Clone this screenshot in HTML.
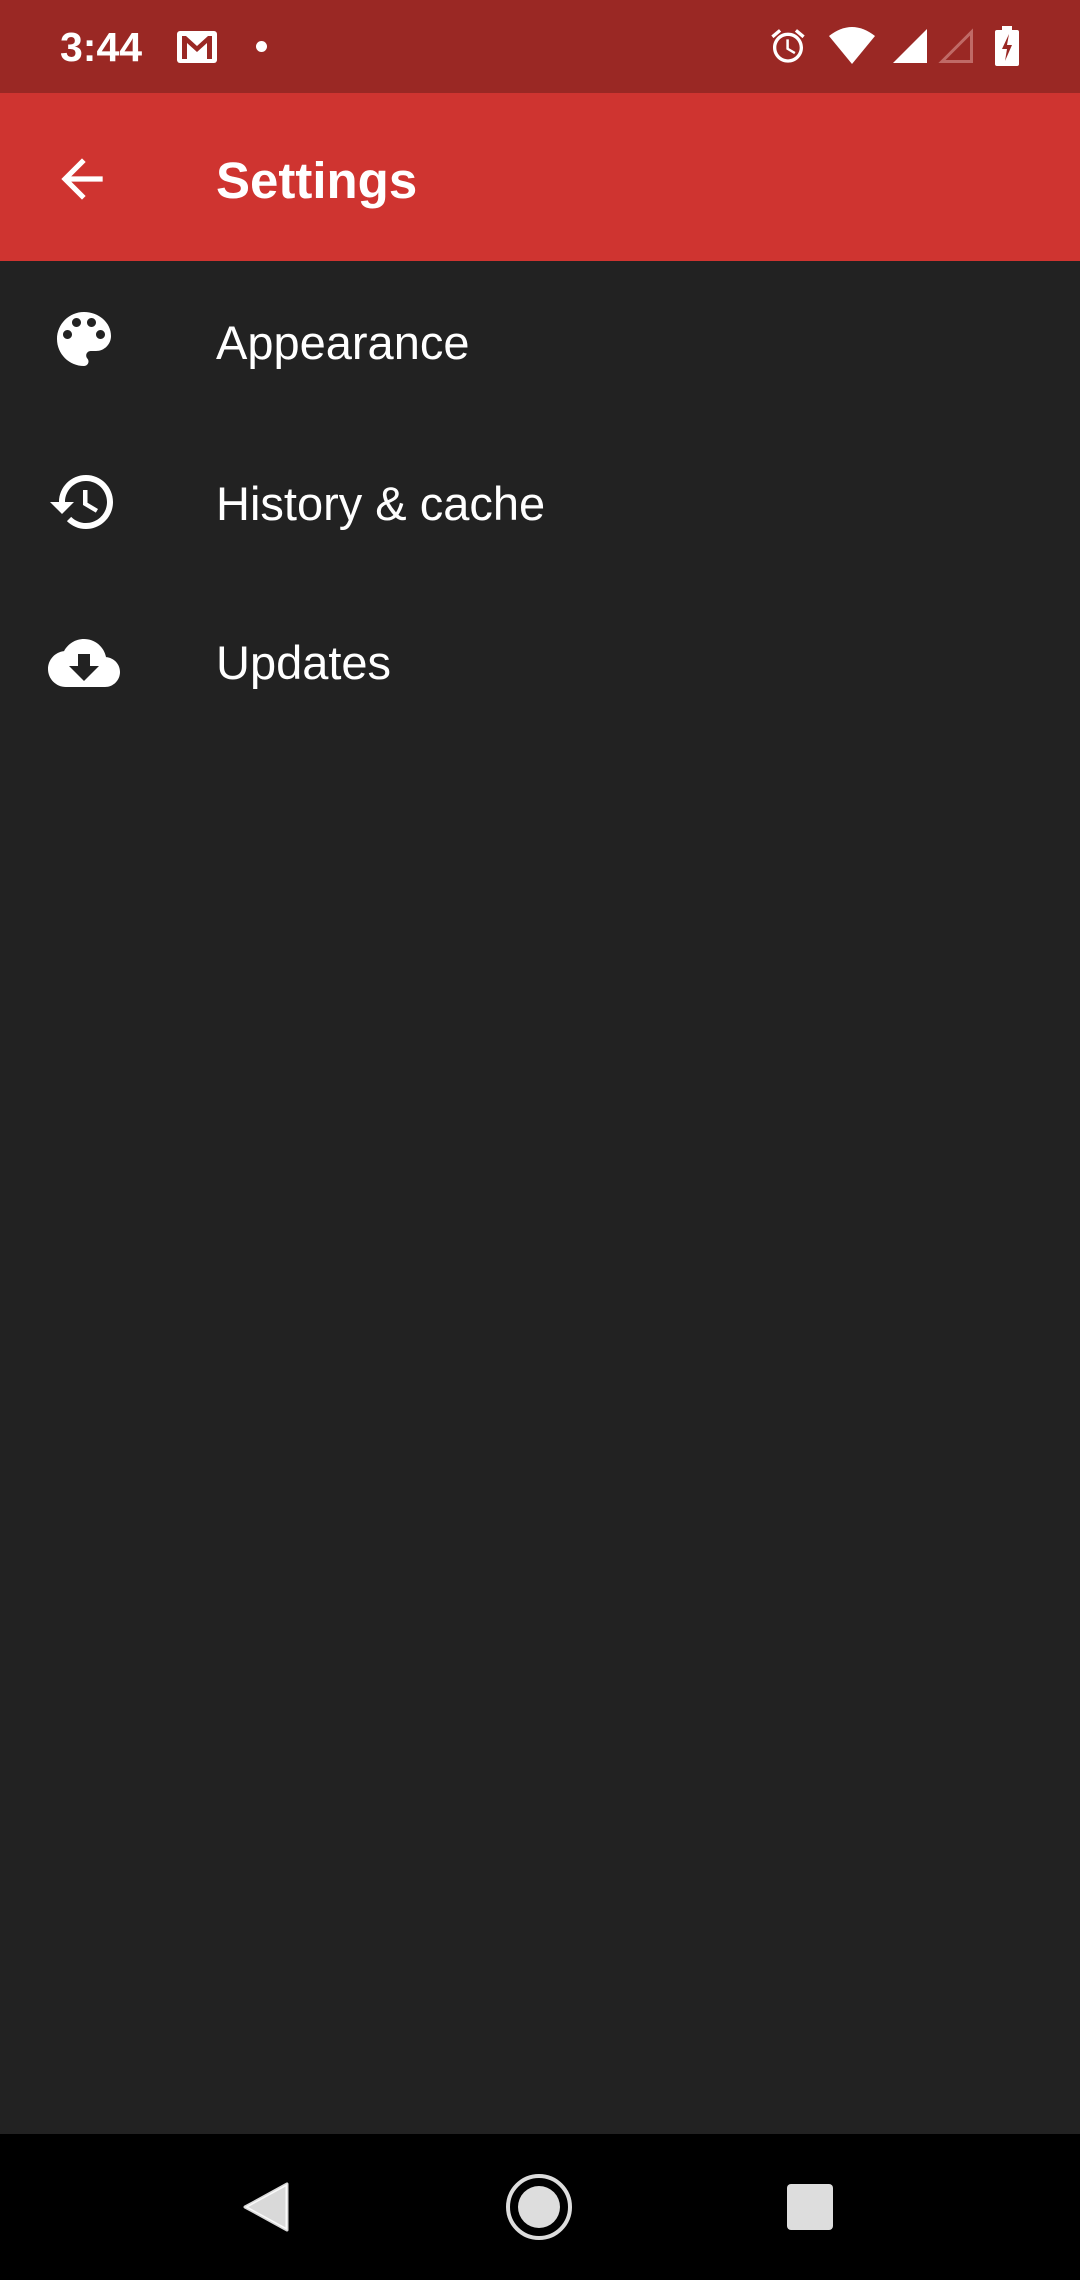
<!DOCTYPE html>
<html><head><meta charset="utf-8"><style>
*{margin:0;padding:0;box-sizing:border-box}
body{width:1080px;height:2280px;background:#222222;font-family:"Liberation Sans",Roboto,sans-serif;color:#fff;position:relative;overflow:hidden}
.abs{position:absolute}
#status{left:0;top:0;width:1080px;height:93px;background:#9a2824}
#bar{left:0;top:93px;width:1080px;height:168px;background:#cf3430}
.t{position:absolute;white-space:nowrap;line-height:1}
#nav{left:0;top:2134px;width:1080px;height:146px;background:#000}
</style></head><body>
<div id="status" class="abs">
 <div class="t" style="left:60px;top:27px;font-size:41px;font-weight:bold">3:44</div>
 <svg class="abs" style="left:176px;top:30px" width="42" height="34" viewBox="0 0 42 34"><rect x="1" y="1" width="40" height="32" rx="3" fill="#fff"/><path d="M6 6 L6 29 L11 29 L11 13 L21 22 L31 13 L31 29 L36 29 L36 6 L32 6 L21 16 L10 6Z" fill="#9a2824"/></svg>
 <div class="abs" style="left:256px;top:41px;width:11px;height:11px;border-radius:50%;background:#fff"></div>
 <svg class="abs" style="left:768px;top:26px" width="40" height="40" viewBox="0 0 24 24"><path fill="#fff" d="M22 5.72l-4.6-3.860-1.29 1.53 4.6 3.86L22 5.72zM7.88 3.39L6.6 1.86 2 5.71l1.29 1.53 4.59-3.85zM12.5 8H11v6l4.75 2.85.75-1.23-4-2.37V8zM12 4c-4.97 0-9 4.03-9 9s4.02 9 9 9c4.97 0 9-4.03 9-9s-4.03-9-9-9zm0 16c-3.87 0-7-3.130-7-7s3.13-7 7-7 7 3.13 7 7-3.13 7-7 7z"/></svg>
 <svg class="abs" style="left:828px;top:26px" width="48" height="38" viewBox="0 0 48 38"><path d="M1 10 Q24 -8 47 10 L24 38Z" fill="#fff"/></svg>
 <svg class="abs" style="left:892px;top:28px" width="36" height="36" viewBox="0 0 36 36"><path d="M35 1 L35 35 L1 35Z" fill="#fff"/></svg>
 <svg class="abs" style="left:938px;top:28px" width="36" height="36" viewBox="0 0 36 36"><path d="M33.5 4 L33.5 33.5 L4 33.5Z" fill="none" stroke="#c06a66" stroke-width="3"/></svg>
 <svg class="abs" style="left:995px;top:26px" width="24" height="40" viewBox="0 0 24 40"><rect x="7" y="0" width="10" height="4" fill="#fff"/><rect x="0" y="4" width="24" height="36" rx="2" fill="#fff"/><path d="M14 8 L7 23 L12 23 L10 35 L17 19 L12 19Z" fill="#9a2824"/></svg>
</div>
<div id="bar" class="abs">
 <svg class="abs" style="left:51px;top:55px" width="62" height="62" viewBox="0 0 24 24"><path fill="#fff" d="M20 11H7.83l5.59-5.59L12 4l-8 8 8 8 1.41-1.41L7.83 13H20v-2z"/></svg>
 <div class="t" style="left:216px;top:62px;font-size:51px;font-weight:bold">Settings</div>
</div>
<svg class="abs" style="left:48px;top:303px" width="72" height="72" viewBox="0 0 24 24"><path fill="#fff" d="M12 3c-4.970 0-9 4.030-9 9s4.030 9 9 9c.83 0 1.5-.67 1.5-1.5 0-.39-.15-.74-.39-1.01-.23-.26-.38-.61-.38-.99 0-.83.67-1.5 1.5-1.5H16c2.76 0 5-2.24 5-5 0-4.42-4.03-8-9-8zm-5.5 9c-.83 0-1.5-.67-1.5-1.5S5.67 9 6.5 9 8 9.67 8 10.5 7.33 12 6.5 12zm3-4C8.67 8 8 7.33 8 6.5S8.67 5 9.5 5s1.5.67 1.5 1.5S10.33 8 9.5 8zm5 0c-.83 0-1.5-.67-1.5-1.5S13.67 5 14.5 5s1.5.67 1.5 1.5S15.33 8 14.5 8zm3 4c-.83 0-1.5-.67-1.5-1.5S16.670 9 17.5 9s1.5.67 1.5 1.5-.67 1.5-1.5 1.5z"/></svg>
<div class="t" style="left:216px;top:319px;font-size:47px">Appearance</div>
<svg class="abs" style="left:47px;top:466px" width="72" height="72" viewBox="0 0 24 24"><path fill="#fff" d="M13 3c-4.97 0-9 4.03-9 9H1l3.89 3.89.07.14L9 12H6c0-3.87 3.13-7 7-7s7 3.13 7 7-3.13 7-7 7c-1.93 0-3.68-.79-4.94-2.06l-1.42 1.42C8.27 19.99 10.51 21 13 21c4.97 0 9-4.03 9-9s-4.03-9-9-9zm-1 5v5l4.28 2.54.72-1.21-3.5-2.08V8H12z"/></svg>
<div class="t" style="left:216px;top:480px;font-size:47px">History &amp; cache</div>
<svg class="abs" style="left:48px;top:627px" width="72" height="72" viewBox="0 0 24 24"><path fill="#fff" d="M19.35 10.04C18.67 6.59 15.64 4 12 4 9.11 4 6.6 5.64 5.35 8.04 2.34 8.36 0 10.91 0 14c0 3.31 2.69 6 6 6h13c2.76 0 5-2.24 5-5 0-2.64-2.05-4.78-4.65-4.96zM17 13l-5 5-5-5h3V9h4v4h3z"/></svg>
<div class="t" style="left:216px;top:639px;font-size:47px">Updates</div>
<div id="nav" class="abs">
 <svg class="abs" style="left:243px;top:48px" width="46" height="50" viewBox="0 0 46 50"><path d="M44 2 L44 48 L2 25Z" fill="#fff" fill-opacity="0.85" stroke="#fff" stroke-opacity="0.85" stroke-width="3" stroke-linejoin="round"/></svg>
 <div class="abs" style="left:506px;top:40px;width:66px;height:66px;border-radius:50%;border:4px solid #ddd"></div>
 <div class="abs" style="left:518px;top:52px;width:42px;height:42px;border-radius:50%;background:#ddd"></div>
 <div class="abs" style="left:787px;top:50px;width:46px;height:46px;border-radius:4px;background:#ddd"></div>
</div>
</body></html>
